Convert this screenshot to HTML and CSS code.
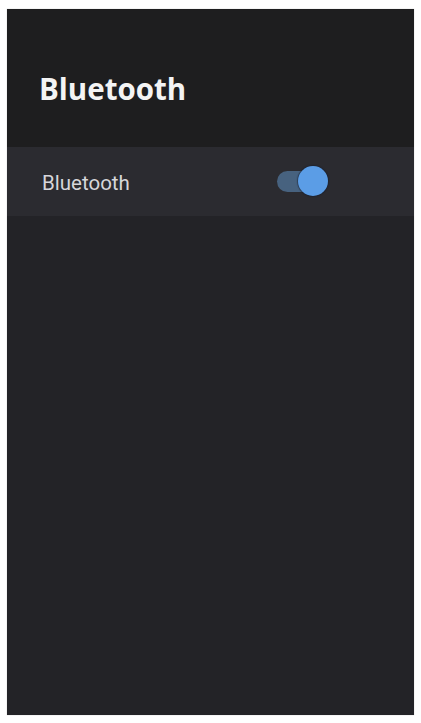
FILE: index.html
```html
<!DOCTYPE html>
<html lang="en">
<head>
<meta charset="utf-8">
<title>Bluetooth</title>
<link rel="stylesheet" href="styles.css">
</head>
<body>
<div class="panel">
  <header class="header">
    <h1 class="title">Bluetooth</h1>
  </header>
  <div class="row">
    <span class="row-label">Bluetooth</span>
    <span class="toggle" role="switch" aria-checked="true">
      <span class="track"></span>
      <span class="knob"></span>
    </span>
  </div>
  <div class="content"></div>
</div>
</body>
</html>
```

FILE: styles.css
```css
html, body {
  margin: 0;
  padding: 0;
  background: #ffffff;
}

body {
  padding: 9px 7px 8px 7px;
  font-family: Roboto, "Noto Sans", sans-serif;
}

.panel {
  width: 407px;
  height: 706px;
  display: flex;
  flex-direction: column;
  background: #232327;
  box-shadow: 0 0 1px rgba(0, 0, 0, 0.25);
}

.header {
  height: 138px;
  flex: none;
  background: #1e1e1f;
  box-sizing: border-box;
  padding: 60px 0 0 32px;
}

.title {
  margin: 0;
  font-family: "Open Sans", "Noto Sans", sans-serif;
  font-weight: 700;
  font-size: 29.5px;
  line-height: 40px;
  color: #f4f4f4;
}

.row {
  height: 69px;
  flex: none;
  display: flex;
  align-items: center;
  justify-content: space-between;
  background: #2b2b30;
  box-sizing: border-box;
  padding: 0 86px 0 35px;
}

.row-label {
  font-size: 20.5px;
  line-height: 24px;
  color: #d6d6da;
  margin-top: 2px;
}

.toggle {
  position: relative;
  width: 51px;
  height: 30px;
  flex: none;
  margin-top: -2px;
}

.track {
  position: absolute;
  left: 0;
  top: 5px;
  width: 44px;
  height: 21px;
  border-radius: 11px;
  background: #47627f;
}

.knob {
  position: absolute;
  right: 0;
  top: 0;
  width: 30px;
  height: 30px;
  border-radius: 50%;
  background: #5b9de6;
  box-shadow: 0 0 1px 1px rgba(20, 30, 50, 0.5);
}

.content {
  flex: 1;
}
```
